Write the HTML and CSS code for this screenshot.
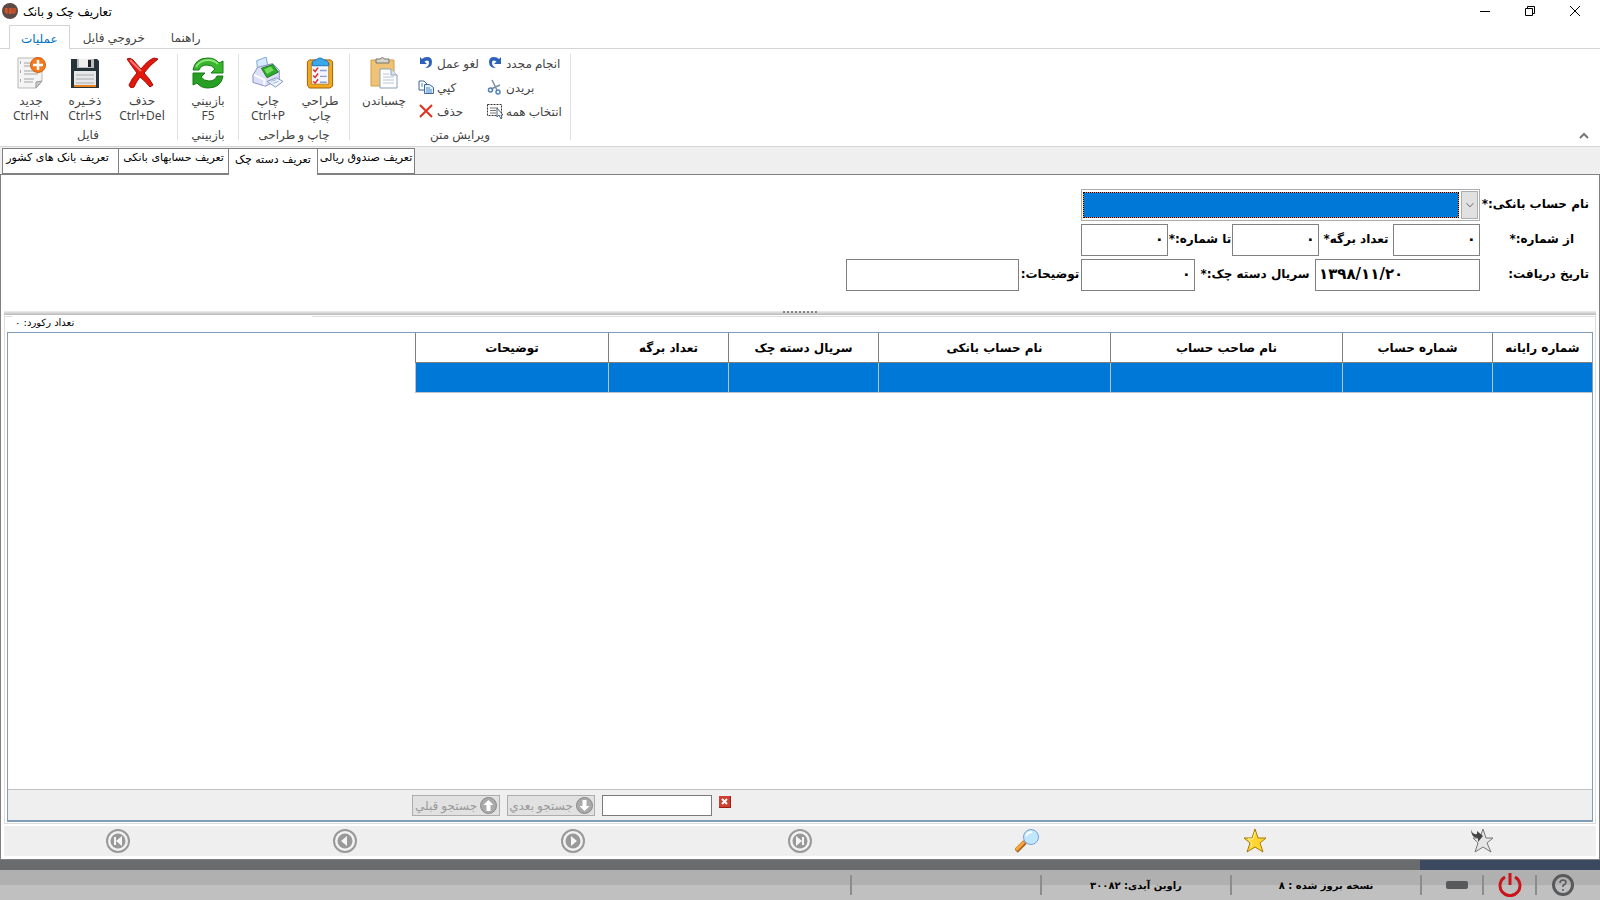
FILE: index.html
```html
<!DOCTYPE html>
<html lang="fa">
<head>
  <meta charset="UTF-8">
  <meta name="viewport" content="width=device-width, initial-scale=1.0">
  <title>تعاریف چک و بانک</title>
  <link rel="stylesheet" href="styles.css">
</head>
<body>

  <header class="titlebar">
    <svg class="logo" width="16" height="16" viewBox="0 0 16 16"><circle cx="8" cy="8" r="8" fill="#5b4a45"/><path d="M3.500 5v3q0 2 1.500 2V5M7.500 11V6q1.500-1 1.500 0v5M11 5v5q2 0 2-2V5" fill="none" stroke="#d2552a" stroke-width="1.500"/></svg>
    <h1>تعاریف چک و بانک</h1>
    <div class="window-buttons">
      <button aria-label="کوچک"><svg width="12" height="12"><path d="M1 6.500h10" stroke="#000"/></svg></button>
      <button aria-label="بازگردانی"><svg width="12" height="12"><path d="M1.500 3.500h7v7h-7zM3.500 3.500v-2h7v7h-2" fill="none" stroke="#000"/></svg></button>
      <button aria-label="بستن"><svg width="12" height="12"><path d="M1 1l10 10M11 1L1 11" stroke="#000"/></svg></button>
    </div>
  </header>

  <nav class="ribbon-tabs">
    <a href="#" class="active">عملیات</a>
    <a href="#">خروجي فایل</a>
    <a href="#">راهنما</a>
  </nav>

  <section class="ribbon">
    <div class="group file">
      <div class="tools">
        <button class="big w54">
          <svg width="32" height="32" viewBox="0 0 32 32"><path d="M3 1h24v23l-6 7H3z" fill="#f4f4f4" stroke="#b9b9b9"/><path d="M9 6h9M9 9h8M9 14h14M9 17h14M9 22h10M9 25h9" stroke="#ccc" stroke-width="2"/><path d="M5.500 4v3M5.500 13v3M5.500 22v3" stroke="#aaa"/><path d="M27 24l-6 7v-6z" fill="#ccc" stroke="#999"/><circle cx="23" cy="8" r="7.500" fill="#f47a20" stroke="#d65f0c"/><path d="M23 3v10M18 8h10" stroke="#fff" stroke-width="2.500"/></svg>
          <span>جدید</span><span>Ctrl+N</span>
        </button>
        <button class="big w54">
          <svg width="32" height="32" viewBox="0 0 32 32"><path d="M2 2h26l2 2v27H2z" fill="#26343a"/><path d="M8 2h17v9H8z" fill="#b9bec1"/><path d="M10 2h9v8h-9z" fill="#eee"/><path d="M19 3h3v7h-3z" fill="#222"/><path d="M5 14h22v15H5z" fill="#e6e7e8"/><path d="M7 18h18M7 22h18M7 26h18" stroke="#aaa"/><path d="M5 28h22v2H5z" fill="#e8821e"/></svg>
          <span>ذخـیره</span><span>Ctrl+S</span>
        </button>
        <button class="big w60">
          <svg width="34" height="32" viewBox="0 0 34 32"><path d="M2 2q3-2 6 1l8 9Q23 3 29 1l4 1Q25 8 19 16q6 6 9 12l-3 2q-5-6-10-10-4 5-6 10-4 2-5-2 3-7 8-12Q6 8 2 2z" fill="#e3180d" stroke="#a60d08"/><path d="M5 3l11 11" stroke="#f77" stroke-width="2"/></svg>
          <span>حذف</span><span>Ctrl+Del</span>
        </button>
      </div>
      <div class="caption">فایل</div>
    </div>

    <div class="group">
      <div class="tools">
        <button class="big w60">
          <svg width="34" height="32" viewBox="0 0 34 32"><path d="M2 13Q4 1 17 1q7 0 11 5l4-2v12H20l4-4q-3-4-8-4-6 0-8 5z" fill="#37b52c" stroke="#167d14"/><path d="M32 19q-2 12-15 12-7 0-11-5l-4 2V16h12l-4 4q3 4 8 4 6 0 8-5z" fill="#279f22" stroke="#167d14"/><path d="M5 10Q9 3 17 3q6 0 10 4" fill="none" stroke="#8de47a" stroke-width="2"/></svg>
          <span>بازبیني</span><span>F5</span>
        </button>
      </div>
      <div class="caption">بازبیني</div>
    </div>

    <div class="group print">
      <div class="tools">
        <button class="big w52">
          <svg width="34" height="34" viewBox="0 0 34 34"><path d="M5 4l10-4 2 11-11 4z" fill="#d8ebff" stroke="#7ba2d8"/><path d="M1 19l5-8 16-4 7 7v10l-15 7L1 27z" fill="#dcdff7" stroke="#8489c6"/><path d="M10 12l12-4 6 8-12 6z" fill="#2eab2c" stroke="#18731c"/><path d="M13 13l7-3 3 4-7 4z" fill="#75dc5d"/><path d="M2 19l11 5v6" fill="none" stroke="#fff" stroke-width="2"/><path d="M16 26l10-4 7 4-8 6z" fill="#eef4ff" stroke="#7c93b9"/><path d="M20 26l6-2M22 28l6-2" stroke="#9fb2cf"/></svg>
          <span>چاپ</span><span>Ctrl+P</span>
        </button>
        <button class="big w52">
          <svg width="30" height="33" viewBox="0 0 30 33"><path d="M4 3h22l2 2v25l-3 2H4l-2-3V5z" fill="#f3a91e" stroke="#9f5d05"/><path d="M6 7h18v21H6z" fill="#f3f6ff" stroke="#b9822a"/><path d="M7 5q2-2 4-2 4-4 8 0 3 0 5 3v3H7z" fill="#3ba8ea" stroke="#1772bb"/><path d="M8 13l2 2 3-4M8 19l2 2 3-4M8 25l2 2 3-4" fill="none" stroke="#e02c24" stroke-width="1.500"/><path d="M15 14h7M15 20h7M15 26h7" stroke="#8aa0d0" stroke-width="1.500"/></svg>
          <span>طراحي</span><span>چاپ</span>
        </button>
      </div>
      <div class="caption">چاپ و طراحی</div>
    </div>

    <div class="group">
      <div class="tools">
        <button class="big w68">
          <svg width="30" height="32" viewBox="0 0 30 32"><path d="M2 3h23v26H2z" fill="#efc375" stroke="#cf9c47"/><path d="M7 6V2h4q2-3 5 0h4v4z" fill="#d5d5cc" stroke="#77766e"/><path d="M11 12h11l6 6v13H11z" fill="#fff" stroke="#8aa0b8"/><path d="M22 12v6h6" fill="#dde7f2" stroke="#8aa0b8"/><path d="M14 17h6M14 20h11M14 23h11M14 26h11" stroke="#b5c4d6"/></svg>
          <span>چسباندن</span>
        </button>
        <div class="small-tools">
          <button><span>لغو عمل</span><svg width="16" height="16" viewBox="0 0 16 16"><path d="M2 2v7h7L6.500 6.500Q11 4 11 8q0 3-4 5 7 0 7-6 0-5-5-5-3 0-5 2z" fill="#2d62bb"/></svg></button>
          <button><span>انجام مجدد</span><svg width="16" height="16" viewBox="0 0 16 16"><path d="M14 2v7H7l2.500-2.500Q5 4 5 8q0 3 4 5-7 0-7-6 0-5 5-5 3 0 5 2z" fill="#2d62bb"/></svg></button>
          <button><span>کپي</span><svg width="16" height="16" viewBox="0 0 16 16"><path d="M1 2h5l3 3v6H1z" fill="#fff" stroke="#3f6798"/><path d="M6.500 5.500h5l4 3v6h-9z" fill="#e2efff" stroke="#3f6798"/><path d="M3 5h2M3 7h2M8 9h4M8 11h6M8 13h6" stroke="#4e89cf"/></svg></button>
          <button><span>بریدن</span><svg width="16" height="16" viewBox="0 0 16 16"><path d="M5 1l5 10M13 6L4 10" stroke="#7b8ea3" stroke-width="1.500"/><circle cx="3.500" cy="11" r="2" fill="none" stroke="#4f82ba" stroke-width="1.500"/><circle cx="11" cy="13" r="2" fill="none" stroke="#4f82ba" stroke-width="1.500"/></svg></button>
          <button><span>حذف</span><svg width="16" height="16" viewBox="0 0 16 16"><path d="M2 2l12 12M14 2L2 14" stroke="#e3301c" stroke-width="2"/></svg></button>
          <button><span>انتخاب همه</span><svg width="16" height="16" viewBox="0 0 16 16"><path d="M.5 1.500h14v11H.5z" fill="none" stroke="#333" stroke-dasharray="2 1"/><path d="M3 5h8M3 7.500h6M3 10h6" stroke="#777"/><path d="M10 5v9l2-2 2 4 1-1-1-3h2z" fill="#fff" stroke="#4c6278"/></svg></button>
        </div>
      </div>
      <div class="caption">ویرایش متن</div>
    </div>
    <button class="collapse" aria-label="جمع کردن"><svg width="10" height="8"><path d="M1 6l4-4 4 4" fill="none" stroke="#777" stroke-width="2"/></svg></button>
  </section>

  <nav class="page-tabs">
    <a href="#" class="t1">تعریف بانک های کشور</a>
    <a href="#" class="t2">تعریف حسابهای بانکی</a>
    <a href="#" class="t3 active">تعریف دسته چک</a>
    <a href="#" class="t4">تعریف صندوق ریالی</a>
  </nav>

  <main class="page">
    <form class="form" dir="rtl">
      <div class="row">
        <label class="first" for="account">نام حساب بانکی:*</label>
        <div class="combo">
          <svg class="arrow" width="17" height="28" viewBox="0 0 17 28"><path d="M5 12l4 4 4-4" fill="none" stroke="#555"/></svg>
          <select id="account"><option></option></select>
        </div>
      </div>
      <div class="row">
        <label class="first mid" for="from">از شماره:*</label>
        <input id="from" class="number" type="text" value="۰">
        <label class="count" for="count">تعداد برگه*</label>
        <input id="count" class="number" type="text" value="۰">
        <label class="to" for="to">تا شماره:*</label>
        <input id="to" class="number" type="text" value="۰">
      </div>
      <div class="row">
        <label class="first" for="date">تاریخ دریافت:</label>
        <input id="date" class="date" type="text" dir="ltr" value="۱۳۹۸/۱۱/۲۰">
        <label class="serial-label" for="serial">سریال دسته چک:*</label>
        <input id="serial" class="serial" type="text" value="۰">
        <label class="desc-label" for="desc">توضیحات:</label>
        <input id="desc" class="desc" type="text">
      </div>
    </form>

    <div class="splitter"><i></i></div>

    <section class="records">
      <div class="record-count" dir="rtl">تعداد رکورد: ۰</div>
      <div class="grid">
        <div class="grid-body" dir="rtl">
          <table>
            <colgroup><col class="c100"><col class="c150"><col class="c232"><col class="c232"><col class="c150"><col class="c120"><col class="c193"></colgroup>
            <thead>
              <tr><th>شماره رایانه</th><th>شماره حساب</th><th>نام صاحب حساب</th><th>نام حساب بانکی</th><th>سریال دسته چک</th><th>تعداد برگه</th><th>توضیحات</th></tr>
            </thead>
            <tbody>
              <tr><td></td><td></td><td></td><td></td><td></td><td></td><td></td></tr>
            </tbody>
          </table>
        </div>
        <div class="search">
          <button disabled><span>جستجو قبلي</span><svg width="17" height="17" viewBox="0 0 17 17"><circle cx="8.500" cy="8.500" r="8" fill="#aaa" stroke="#888"/><path d="M8.500 3l5 5h-3v6h-4V8h-3z" fill="#fff"/></svg></button>
          <button disabled><span>جستجو بعدي</span><svg width="17" height="17" viewBox="0 0 17 17"><circle cx="8.500" cy="8.500" r="8" fill="#aaa" stroke="#888"/><path d="M8.500 14l5-5h-3V3h-4v6h-3z" fill="#fff"/></svg></button>
          <input type="text" aria-label="جستجو">
          <button class="clear" aria-label="پاک کردن"><svg width="12" height="12" viewBox="0 0 12 12"><path d="M0 0h12v12H0z" fill="#cf3e30"/><path d="M0 11.500h11.500V0" fill="none" stroke="#9c1d12"/><path d="M3 3l5 5M8 3L3 8" stroke="#fff" stroke-width="2"/></svg></button>
        </div>
      </div>
    </section>

    <div class="navigator">
      <button aria-label="اولین"><svg width="24" height="24" viewBox="0 0 24 24"><circle cx="12" cy="12" r="11" fill="#f2f2f2" stroke="#999" stroke-width="2"/><circle cx="12" cy="12" r="7.500" fill="#999"/><path d="M8 8h2v8H8zM16 7v10l-6-5z" fill="#f6f6f6"/></svg></button>
      <button aria-label="قبلی"><svg width="24" height="24" viewBox="0 0 24 24"><circle cx="12" cy="12" r="11" fill="#f2f2f2" stroke="#999" stroke-width="2"/><circle cx="12" cy="12" r="7.500" fill="#999"/><path d="M14 7v10l-6-5z" fill="#f6f6f6"/></svg></button>
      <button aria-label="بعدی"><svg width="24" height="24" viewBox="0 0 24 24"><circle cx="12" cy="12" r="11" fill="#f2f2f2" stroke="#999" stroke-width="2"/><circle cx="12" cy="12" r="7.500" fill="#999"/><path d="M10 7v10l6-5z" fill="#f6f6f6"/></svg></button>
      <button aria-label="آخرین"><svg width="24" height="24" viewBox="0 0 24 24"><circle cx="12" cy="12" r="11" fill="#f2f2f2" stroke="#999" stroke-width="2"/><circle cx="12" cy="12" r="7.500" fill="#999"/><path d="M14 8h2v8h-2zM8 7v10l6-5z" fill="#f6f6f6"/></svg></button>
      <button aria-label="جستجو"><svg width="24" height="24" viewBox="0 0 24 24"><path d="M1 22l9-9" stroke="#a8641c" stroke-width="5"/><path d="M1 21l8-8" stroke="#f9a63a" stroke-width="3"/><circle cx="16" cy="8" r="7.500" fill="#bfe8ff" stroke="#7d9edb"/><path d="M11 7q2-4 6-4" fill="none" stroke="#fff" stroke-width="2"/></svg></button>
      <button aria-label="نشانه"><svg width="24" height="26" viewBox="0 0 24 26"><path d="M12 1l3 9h8l-6 5 3 9-8-5-8 5 3-9-6-5h8z" fill="#ffd631" stroke="#a87908"/><path d="M12 4l-2 7H5l4 4-1 4" fill="none" stroke="#fff39b"/></svg></button>
      <button aria-label="رفتن به نشانه"><svg width="24" height="26" viewBox="0 0 24 26"><path d="M13 1l3 9h7l-6 5 4 9-8-5-8 5 3-9-5-5h7z" fill="#e5e5e5" stroke="#777"/><path d="M1 1q1 6 6 5V3l6 5-5 6v-4Q1 10 1 1z" fill="#444"/></svg></button>
    </div>
  </main>

  <div class="strip"><i></i></div>
  <footer class="status">
    <div class="cell fill"></div>
    <div class="cell w190"></div>
    <div class="cell w190" dir="rtl">راوین آیدی: ۳۰۰۸۲</div>
    <div class="cell w190" dir="rtl">نسخه بروز شده : ۸</div>
    <div class="cell minimize"><button aria-label="کوچک کردن"><svg width="22" height="8"><rect width="22" height="8" rx="2" fill="#58595b"/></svg></button></div>
    <div class="cell power"><button aria-label="خروج"><svg width="24" height="24" viewBox="0 0 24 24"><path d="M7 4a10 10 0 1 0 10 0M12 0v12" fill="none" stroke="#c9151b" stroke-width="3"/></svg></button></div>
    <div class="cell help"><button aria-label="راهنما"><svg width="24" height="24" viewBox="0 0 24 24"><circle cx="12" cy="12" r="9.500" fill="none" stroke="#58595b" stroke-width="3"/><path d="M9 10q0-3 3-3t3 2.500q0 1.500-3 3V14M12 16v2" fill="none" stroke="#58595b" stroke-width="1.500"/></svg></button></div>
  </footer>

</body>
</html>
```

FILE: styles.css
```css
* {
  box-sizing: border-box;
}

body {
  margin: 0;
  min-height: 100vh;
  display: flex;
  flex-direction: column;
  background: #fff;
  color: #000;
  font-family: "Noto Sans", "DejaVu Sans", sans-serif;
  font-size: 12px;
}

button {
  padding: 0;
  border: 0;
  background: none;
  color: inherit;
  font: inherit;
}

svg {
  display: block;
  flex: none;
}

a {
  color: inherit;
  text-decoration: none;
}

.titlebar {
  display: flex;
  align-items: center;
  gap: 5px;
  height: 25px;
  padding: 0 19px 3px 2px;
}

.titlebar h1 {
  flex: 1;
  margin: 0;
  font-size: 12px;
  font-weight: normal;
}

.window-buttons {
  display: flex;
  gap: 33px;
}

/* ribbon */
.ribbon-tabs {
  display: flex;
  height: 24px;
  padding-left: 9px;
  border-bottom: 1px solid #d4d4d4;
  color: #444;
}

.ribbon-tabs a {
  height: 24px;
  padding: 0 13px;
  line-height: 25px;
}

.ribbon-tabs .active {
  padding: 0 11px;
  border: 1px solid #d4d4d4;
  border-bottom: 0;
  background: #fff;
  color: #0072c6;
}

.ribbon {
  display: flex;
  align-items: flex-end;
  height: 98px;
  padding: 6px 0;
  border-bottom: 1px solid #d4d4d4;
  color: #444;
}

.group {
  display: flex;
  flex-direction: column;
  height: 86px;
  border-right: 1px solid #e0e0e0;
}

.file {
  padding: 0 5px 0 4px;
}

.print {
  padding: 0 3px;
}

.tools {
  display: flex;
  flex: 1;
}

.big {
  display: flex;
  flex-direction: column;
  align-items: center;
  line-height: 15px;
}

.big svg {
  height: 32px;
  margin: 3px 0 4px;
}

.w52 {
  width: 52px;
}

.w54 {
  width: 54px;
}

.w60 {
  width: 60px;
}

.w68 {
  width: 68px;
}

.small-tools {
  display: grid;
  grid-template-columns: 69px 83px;
  grid-template-rows: repeat(3, 24px);
  margin-top: -3px;
}

.small-tools button {
  display: flex;
  flex-direction: row-reverse;
  justify-content: flex-end;
  align-items: center;
  gap: 3px;
  white-space: nowrap;
}

.caption {
  height: 15px;
  line-height: 19px;
  text-align: center;
}

.collapse {
  margin-left: auto;
  padding-right: 11px;
}

/* page tabs */
.page-tabs {
  display: flex;
  height: 28px;
  padding: 1px 0 0 2px;
  background: #efefef;
  border-bottom: 1px solid #808080;
  font-family: "DejaVu Sans", sans-serif;
  font-size: 11px;
}

.page-tabs a {
  height: 26px;
  border: 1px solid #808080;
  border-left: 0;
  background: #fff;
  line-height: 17px;
  text-align: center;
  white-space: nowrap;
  direction: rtl;
}

.page-tabs .active {
  height: 27px;
  border-bottom: 0;
  line-height: 21px;
}

.page-tabs .t1 {
  width: 117px;
  padding-right: 6px;
  border-left: 1px solid #808080;
}

.page-tabs .t2 {
  width: 110px;
}

.page-tabs .t3 {
  width: 89px;
}

.page-tabs .t4 {
  width: 97px;
}

.page {
  display: flex;
  flex: 1;
  flex-direction: column;
  padding: 0 3px 3px;
  border: 1px solid #808080;
  border-top: 0;
}

/* form */
.form {
  display: flex;
  flex-direction: column;
  gap: 3px;
  height: 136px;
  padding-top: 14px;
  font-family: "DejaVu Sans", sans-serif;
  font-size: 12px;
  font-weight: bold;
}

.row {
  display: flex;
  height: 32px;
}

.row label {
  line-height: 30px;
  text-align: center;
  white-space: nowrap;
}

.row input {
  padding: 0 3px 3px;
  border: 1px solid #808080;
  background: #fff;
  font: inherit;
  font-size: 15px;
}

.row .first {
  width: 116px;
  padding-right: 7px;
  text-align: right;
}

.row .mid {
  padding-right: 22px;
}

.number {
  width: 87px;
}

.count {
  width: 74px;
}

.to {
  width: 64px;
}

.date {
  width: 165px;
}

.serial-label {
  width: 120px;
}

.serial {
  width: 114px;
}

.desc-label {
  width: 62px;
}

.desc {
  width: 173px;
}

.combo {
  display: flex;
  gap: 1px;
  width: 399px;
  padding: 1px;
  border: 1px solid #abadb3;
}

.combo .arrow {
  border: 1px solid #adadad;
  background: #e1e1e1;
}

.combo select {
  flex: 1;
  margin: 1px 1px 1px 0;
  appearance: none;
  border: 1px dotted #000;
  border-radius: 0;
  background: #0078d7;
  background: linear-gradient(#0078d7, #0078d7) padding-box, #ff8728 border-box;
}

.splitter {
  display: flex;
  justify-content: center;
  height: 4px;
  background: linear-gradient(#eee, #b8b8b8);
}

.splitter i {
  width: 34px;
  border-top: 2px dotted #888;
}

/* records */
.records {
  display: flex;
  flex: 1;
  flex-direction: column;
  margin: 1px 0 2px;
  padding: 0 2px 1px;
  border: 1px solid #ddd;
}

.record-count {
  width: 300px;
  height: 16px;
  margin: -1px 0 0 5px;
  padding-left: 3px;
  background: #fff;
  font-family: "DejaVu Sans", sans-serif;
  font-size: 10px;
  line-height: 14px;
  text-align: left;
}

.grid {
  display: flex;
  flex: 1;
  flex-direction: column;
  border: 1px solid #7f9db9;
  border-bottom-width: 2px;
}

.grid-body {
  flex: 1;
}

table {
  width: 1177px;
  border-collapse: separate;
  border-spacing: 0;
  table-layout: fixed;
  font-family: "DejaVu Sans", sans-serif;
  font-size: 12px;
}

th,
td {
  height: 30px;
  padding: 0;
}

th {
  border-bottom: 1px solid #808080;
  border-left: 1px solid #808080;
}

td {
  border-bottom: 1px solid #b8c4d0;
  border-left: 1px solid #b8c4d0;
  background: #0078d7;
}

.c100 {
  width: 100px;
}

.c120 {
  width: 120px;
}

.c150 {
  width: 150px;
}

.c193 {
  width: 193px;
}

.c232 {
  width: 232px;
}

.search {
  display: flex;
  gap: 7px;
  height: 31px;
  padding: 5px 0 0 404px;
  border-top: 1px solid #c0c0c0;
  background: #efefef;
}

.search button {
  display: flex;
  align-items: center;
  justify-content: center;
  gap: 3px;
  width: 88px;
  height: 21px;
  border: 1px solid #adadad;
  background: #e1e1e1;
  color: #999;
  font-size: 12px;
  white-space: nowrap;
}

.search input {
  width: 110px;
  height: 21px;
  border: 1px solid #7a7a7a;
  background: #fff;
}

.search .clear {
  width: 12px;
  height: 14px;
  border: 0;
  background: none;
}

.navigator {
  display: grid;
  grid-template-columns: repeat(7, 1fr);
  height: 30px;
  background: #efefef;
}

.navigator button {
  display: flex;
  align-items: center;
  justify-content: center;
}

/* status bar */
.strip {
  display: flex;
  justify-content: flex-end;
  height: 10px;
  background: #6a6b6d;
}

.strip i {
  width: 180px;
  background: #3a4960;
}

.status {
  display: flex;
  align-items: center;
  height: 30px;
  background: linear-gradient(#b0b0b0 50%, #c0c0c0 50%);
  font-family: "DejaVu Sans", sans-serif;
  font-size: 10px;
  font-weight: bold;
}

.cell {
  display: flex;
  align-items: center;
  justify-content: center;
  height: 20px;
  border-right: 2px solid #8c8c8c;
}

.fill {
  flex: 1;
}

.w190 {
  width: 190px;
}

.minimize {
  width: 62px;
  padding-left: 10px;
}

.power {
  width: 53px;
}

.help {
  width: 63px;
  padding-right: 12px;
  border: 0;
}
```
